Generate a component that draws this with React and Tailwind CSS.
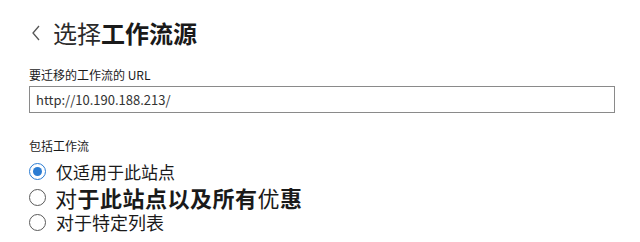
const font = { fontFamily: '"Noto Sans CJK SC", "Noto Sans", sans-serif' };

function Radio({ checked }) {
  return (
    <span
      className={
        'flex h-[17px] w-[17px] shrink-0 items-center justify-center rounded-full border ' +
        (checked ? 'border-[#2b7cd3]' : 'border-[#5a5a5a]')
      }
    >
      {checked && <span className="h-[9px] w-[9px] rounded-full bg-[#2b7cd3]" />}
    </span>
  );
}

export default function App() {
  return (
    <div className="h-[242px] w-[640px] bg-white pl-[29px] pr-[25px] text-[#1a1a1a]" style={font}>
      <div className="flex items-center pt-[17px]">
        <svg width="10" height="16" viewBox="0 0 10 16" className="ml-[2px] mr-[12px]">
          <path d="M8 1 L2 8 L8 15" fill="none" stroke="#555" strokeWidth="1.3" />
        </svg>
        <h1 className="text-[24px] leading-[32px]">
          <span className="font-normal text-[#2a2a2a]">选择</span>
          <span className="font-bold">工作流源</span>
        </h1>
      </div>

      <div className="mt-[18px] text-[12px] leading-[16px]">要迁移的工作流的 URL</div>
      <input
        className="mt-[3px] block h-[27px] w-full border border-[#8a8a8a] px-[6px] text-[13px] text-[#333] outline-none"
        style={font}
        defaultValue="http://10.190.188.213/"
      />

      <div className="mt-[25px] text-[12px] leading-[16px]">包括工作流</div>
      <div className="mt-[5px] flex flex-col">
        <label className="flex h-[25px] items-center gap-[10px]">
          <Radio checked />
          <span className="text-[17px] leading-[25px]">仅适用于此站点</span>
        </label>
        <label className="flex h-[26px] items-center gap-[9px]">
          <Radio />
          <span className="whitespace-nowrap text-[22px] font-bold leading-[26px] tracking-[0.5px]">
            <span className="font-normal">对</span>于此站点以及所有<span className="font-normal">优</span>惠
          </span>
        </label>
        <label className="flex h-[24px] items-center gap-[10px]">
          <Radio />
          <span className="text-[18px] leading-[24px]">对于特定列表</span>
        </label>
      </div>
    </div>
  );
}
